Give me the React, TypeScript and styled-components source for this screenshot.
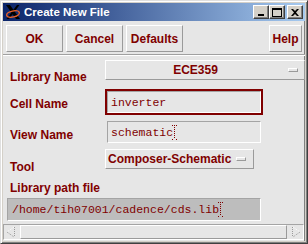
import React from "react";
import styled, { createGlobalStyle } from "styled-components";

const RED = "#800000";
const FACE = "#e6e6e6";

const Global = createGlobalStyle`
  html, body { margin: 0; padding: 0; background: #d4d0c8; }
  body { width: 308px; height: 244px; overflow: hidden; font-family: "Liberation Sans", Arial, sans-serif; }
`;

const Window = styled.div`
  box-sizing: border-box;
  width: 308px;
  height: 244px;
  background: #d4d0c8;
  border: 1px solid;
  border-color: #dfdfdf #404040 #404040 #dfdfdf;
  box-shadow: inset 1px 1px #ffffff, inset -1px -1px #808080;
  padding: 2px;
  display: flex;
  flex-direction: column;
`;

const TitleBar = styled.div`
  height: 18px;
  flex: none;
  display: flex;
  align-items: center;
  padding: 0 2px 0 2px;
  background: linear-gradient(to right, #0a246a, #a6caf0);
`;

const Title = styled.span`
  color: #ffffff;
  font-weight: bold;
  font-size: 11.5px;
  margin-left: 3px;
  flex: 1;
  white-space: nowrap;
`;

const CapButton = styled.div<{ $gap?: number }>`
  box-sizing: border-box;
  width: 16px;
  height: 14px;
  margin-left: ${(p) => p.$gap ?? 0}px;
  background: #d4d0c8;
  border: 1px solid;
  border-color: #ffffff #404040 #404040 #ffffff;
  box-shadow: inset -1px -1px #808080;
  display: flex;
  align-items: center;
  justify-content: center;
`;

const Client = styled.div`
  flex: 1;
  background: ${FACE};
  display: flex;
  flex-direction: column;
  overflow: hidden;
  padding-bottom: 1px;
  box-shadow: inset -1px 0 #808080;
`;

const ButtonBar = styled.div`
  display: flex;
  gap: 3px;
  padding: 4px 3px 0 3px;
`;

const Button = styled.div<{ $w: number; $push?: boolean }>`
  box-sizing: border-box;
  width: ${(p) => p.$w}px;
  height: 27px;
  margin-left: ${(p) => (p.$push ? "auto" : "0")};
  border: 1px solid;
  border-color: #ffffff #9a9a9a #9a9a9a #ffffff;
  display: flex;
  align-items: center;
  justify-content: center;
  color: ${RED};
  font-weight: bold;
  font-size: 12px;
`;

const Groove = styled.div`
  margin-top: 2px;
  border-top: 1px solid #a0a0a0;
  border-bottom: 1px solid #ffffff;
`;

const Form = styled.div`
  flex: 1;
  display: flex;
  flex-direction: column;
  padding: 4px 0 0 4px;
`;

const Row = styled.div<{ $h: number; $mt: number }>`
  display: flex;
  height: ${(p) => p.$h}px;
  margin-top: ${(p) => p.$mt}px;
`;

const Label = styled.div<{ $drop?: number }>`
  width: 98px;
  flex: none;
  box-sizing: border-box;
  padding-left: 3px;
  margin-top: ${(p) => p.$drop ?? 0}px;
  height: 14px;
  line-height: 14px;
  color: ${RED};
  font-weight: bold;
  font-size: 12px;
  white-space: nowrap;
`;

const Option = styled.div<{ $w?: number }>`
  box-sizing: border-box;
  height: 20px;
  ${(p) => (p.$w ? `width: ${p.$w}px;` : "flex: 1;")}
  border: 1px solid;
  border-color: #ffffff #9a9a9a #9a9a9a #ffffff;
  display: flex;
  align-items: center;
  padding: 0 6px 0 2px;
  color: ${RED};
  font-weight: bold;
  font-size: 12px;
  white-space: nowrap;
`;

const OptionText = styled.span<{ $center?: boolean }>`
  flex: ${(p) => (p.$center ? 1 : "none")};
  text-align: center;
  margin-right: 5px;
`;

const Indicator = styled.span`
  box-sizing: border-box;
  width: 10px;
  height: 4px;
  border: 1px solid;
  border-color: #ffffff #9a9a9a #9a9a9a #ffffff;
`;

const Highlight = styled.div<{ $on?: boolean; $w: number }>`
  box-sizing: border-box;
  width: ${(p) => p.$w}px;
  height: 26px;
  border: 2px solid ${(p) => (p.$on ? RED : "transparent")};
`;

const Field = styled.div<{ $bg?: string; $w?: number; $h: number; $pad: number }>`
  box-sizing: border-box;
  width: ${(p) => (p.$w ? `${p.$w}px` : "100%")};
  height: ${(p) => p.$h}px;
  background: ${(p) => p.$bg ?? FACE};
  border: 1px solid;
  border-color: #a4a4a4 #ffffff #ffffff #a4a4a4;
  display: flex;
  align-items: center;
  padding-left: ${(p) => p.$pad}px;
  color: ${RED};
  font-family: "Liberation Mono", "Courier New", monospace;
  font-size: 11.5px;
  white-space: nowrap;
`;

const PathLabel = styled(Label)`
  margin-top: 12px;
`;

const PathField = styled(Field)`
  margin-top: 3px;
`;

const ScrollBar = styled.div`
  flex: none;
  margin: 0 1px 0 0;
  height: 16px;
  display: flex;
  box-sizing: border-box;
  border: 1px solid;
  border-color: #a4a4a4 #ffffff #ffffff #a4a4a4;
`;

const Arrow = styled.div`
  width: 14px;
  flex: none;
  display: flex;
  align-items: center;
  justify-content: center;
`;

const Thumb = styled.div`
  flex: 1;
  box-sizing: border-box;
  margin: 0 2px;
  border: 1px solid;
  border-color: #ffffff #9a9a9a #9a9a9a #ffffff;
`;

const Cursor = () => (
  <svg width="5" height="15" viewBox="0 0 5 15" style={{ marginLeft: -1 }}>
    {[0, 2, 4].map((x) => (
      <rect key={"t" + x} x={x} y={0} width={1} height={1} fill={RED} />
    ))}
    {[2, 4, 6, 8, 10, 12].map((y) => (
      <rect key={"v" + y} x={2} y={y} width={1} height={1} fill={RED} />
    ))}
    {[0, 4].map((x) => (
      <rect key={"b" + x} x={x} y={14} width={1} height={1} fill={RED} />
    ))}
  </svg>
);

const XLogo = () => (
  <svg width="16" height="16" viewBox="0 0 16 16">
    <path d="M1 1 L5 1 L15 15 L11 15 Z" fill="#000" />
    <path d="M12 1 L14.5 1 L4 15 L1.5 15 Z" fill="#000" />
    <ellipse
      cx="8"
      cy="10"
      rx="6.5"
      ry="3"
      fill="none"
      stroke="#e8602a"
      strokeWidth="1.4"
      transform="rotate(-12 8 10)"
    />
  </svg>
);

const ArrowGlyph = ({ right }: { right?: boolean }) => (
  <svg width="12" height="12" viewBox="0 0 12 12" style={{ transform: right ? "scaleX(-1)" : undefined }}>
    <line x1="9" y1="1" x2="2" y2="6" stroke="#ffffff" strokeDasharray="1 1" />
    <line x1="2" y1="6" x2="9" y2="11" stroke="#9a9a9a" strokeDasharray="1 1" />
    <line x1="9.5" y1="1" x2="9.5" y2="11" stroke="#9a9a9a" strokeDasharray="1 1" />
  </svg>
);

export default function App() {
  return (
    <>
      <Global />
      <Window>
        <TitleBar>
          <XLogo />
          <Title>Create New File</Title>
          <CapButton>
            <svg width="8" height="8" viewBox="0 0 8 8">
              <rect x="1" y="6" width="6" height="2" fill="#000" />
            </svg>
          </CapButton>
          <CapButton>
            <svg width="10" height="9" viewBox="0 0 10 9">
              <rect x="0.5" y="0.5" width="9" height="8" fill="none" stroke="#000" />
              <rect x="0" y="0" width="10" height="2" fill="#000" />
            </svg>
          </CapButton>
          <CapButton $gap={2}>
            <svg width="8" height="7" viewBox="0 0 8 7">
              <path d="M0 0 L2 0 L4 2 L6 0 L8 0 L5 3.5 L8 7 L6 7 L4 5 L2 7 L0 7 L3 3.5 Z" fill="#000" />
            </svg>
          </CapButton>
        </TitleBar>
        <Client>
          <ButtonBar>
            <Button $w={57}>OK</Button>
            <Button $w={57}>Cancel</Button>
            <Button $w={57}>Defaults</Button>
            <Button $w={33} $push>
              Help
            </Button>
          </ButtonBar>
          <Groove />
          <Form>
            <Row $h={20} $mt={0}>
              <Label $drop={10}>Library Name</Label>
              <Option>
                <OptionText $center>ECE359</OptionText>
                <Indicator />
              </Option>
            </Row>
            <Row $h={26} $mt={9}>
              <Label $drop={8}>Cell Name</Label>
              <Highlight $on $w={158}>
                <Field $h={22} $pad={3}>inverter</Field>
              </Highlight>
            </Row>
            <Row $h={26} $mt={4}>
              <Label $drop={9}>View Name</Label>
              <Highlight $w={158}>
                <Field $h={22} $pad={3}>
                  schematic
                  <Cursor />
                </Field>
              </Highlight>
            </Row>
            <Row $h={20} $mt={4}>
              <Label $drop={11}>Tool</Label>
              <Option $w={149}>
                <OptionText>Composer-Schematic</OptionText>
                <Indicator />
              </Option>
            </Row>
            <PathLabel>Library path file</PathLabel>
            <PathField $bg="#bdbdbd" $w={254} $h={23} $pad={4}>
              /home/tih07001/cadence/cds.lib
              <Cursor />
            </PathField>
          </Form>
          <ScrollBar>
            <Arrow>
              <ArrowGlyph />
            </Arrow>
            <Thumb />
            <Arrow>
              <ArrowGlyph right />
            </Arrow>
          </ScrollBar>
        </Client>
      </Window>
    </>
  );
}
